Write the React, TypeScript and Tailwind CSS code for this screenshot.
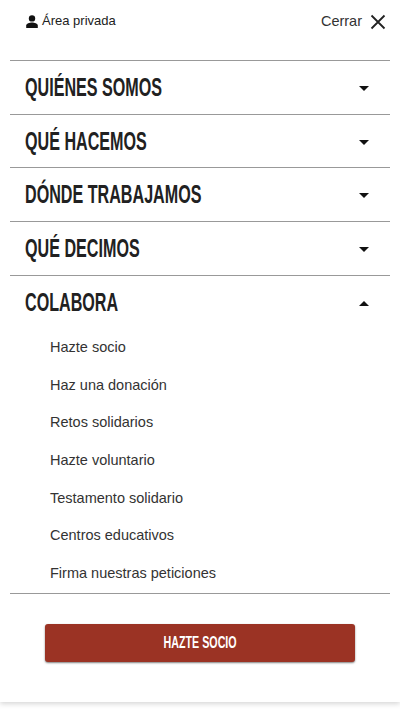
const sections = ["QUIÉNES SOMOS", "QUÉ HACEMOS", "DÓNDE TRABAJAMOS", "QUÉ DECIMOS"];

const links = [
  "Hazte socio",
  "Haz una donación",
  "Retos solidarios",
  "Hazte voluntario",
  "Testamento solidario",
  "Centros educativos",
  "Firma nuestras peticiones",
];

function Caret({ up }: { up?: boolean }) {
  return (
    <svg width="10" height="5" viewBox="0 0 10 5" className="mt-[2px] shrink-0">
      <path d={up ? "M0 5 L5 0 L10 5 Z" : "M0 0 L5 5 L10 0 Z"} fill="#111" />
    </svg>
  );
}

function Row({ label, up }: { label: string; up?: boolean }) {
  return (
    <div className="flex h-[53.7px] items-center justify-between border-t border-[#999] pl-[15px] pr-[21px]">
      {/* no Oswald here, so squeeze the bold sans */}
      <span className="mt-[1px] inline-block origin-left scale-x-[0.645] whitespace-nowrap font-['Liberation_Sans',sans-serif] text-[25px] font-bold text-[#212121]">
        {label}
      </span>
      <Caret up={up} />
    </div>
  );
}

export default function App() {
  return (
    <div className="h-[710px] w-[400px] overflow-hidden bg-white font-['Liberation_Sans',sans-serif]">
      <div className="h-[702px] bg-white px-[10px] shadow-[0_2px_5px_rgba(0,0,0,0.16)]">
        {/* Top bar */}
        <div className="flex h-[60px] items-start justify-between pl-4 pr-[4px] pt-[11px]">
          <div className="flex items-center gap-[4px] text-[13px] leading-[20px] text-[#212121]">
            <svg width="12" height="13" viewBox="0 0 12 13">
              <circle cx="6" cy="3.4" r="3.2" fill="#111" />
              <path d="M0.2 13 V10.6 C0.2 8.6 3.6 7.6 6 7.6 C8.4 7.6 11.8 8.6 11.8 10.6 V13 Z" fill="#111" />
            </svg>
            <span>Área privada</span>
          </div>
          <div className="flex items-center gap-2 text-[14.5px] leading-[20px] text-[#333]">
            <span>Cerrar</span>
            <svg width="16" height="16" viewBox="0 0 16 16" className="mt-[1px]">
              <path d="M1.5 1.5 L14.5 14.5 M14.5 1.5 L1.5 14.5" stroke="#222" strokeWidth="1.8" fill="none" />
            </svg>
          </div>
        </div>

        {sections.map((s) => (
          <Row key={s} label={s} />
        ))}
        <Row label="COLABORA" up />

        {/* Colabora links */}
        <ul className="flex h-[264.2px] flex-col pl-10 pt-[0.5px] text-[14.5px] text-[#333]">
          {links.map((l) => (
            <li key={l} className="flex h-[37.7px] shrink-0 items-center">
              {l}
            </li>
          ))}
        </ul>

        <div className="border-t border-[#999] px-[35px] pt-[30px]">
          <button className="flex h-[38px] w-full items-center justify-center rounded-[3px] bg-[#9b3324] text-white shadow-[0_1px_2px_rgba(0,0,0,0.5)]">
            <span className="inline-block scale-x-[0.63] whitespace-nowrap font-['Liberation_Sans',sans-serif] text-[17px] font-bold">
              HAZTE SOCIO
            </span>
          </button>
        </div>
      </div>
    </div>
  );
}
